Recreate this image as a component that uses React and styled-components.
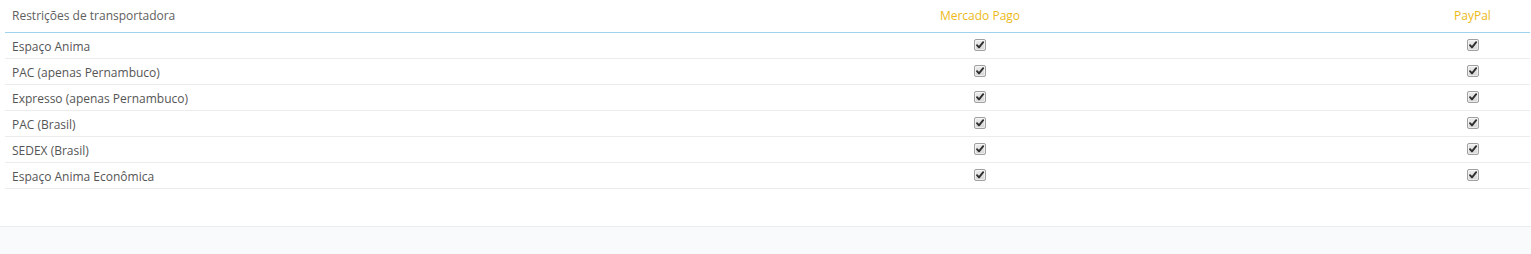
import React from "react";
import styled, { createGlobalStyle } from "styled-components";

const Global = createGlobalStyle`
  html, body { margin: 0; padding: 0; background: #fff; }
  body { font-family: "Open Sans", "Liberation Sans", sans-serif; }
`;

const Page = styled.div`
  width: 1531px;
  height: 254px;
  display: flex;
  flex-direction: column;
  background: #fff;
`;

const Panel = styled.div`
  padding: 0 1px 0 5px;
  height: 226px;
`;

const Footer = styled.div`
  flex: 1;
  border-top: 1px solid #e9ecf0;
  background: #f9fafc;
`;

const Table = styled.table`
  width: 100%;
  border-collapse: collapse;
  table-layout: fixed;
  font-size: 12px;
  color: #555;
`;

const Th = styled.th`
  font-weight: 400;
  height: 32px;
  padding: 0 7px;
  text-align: ${(p) => (p.$center ? "center" : "left")};
  color: ${(p) => (p.$accent ? "#ecb916" : "#606060")};
  border-bottom: 1px solid #9dd3ec;
  box-sizing: border-box;
  vertical-align: middle;
`;

const Td = styled.td`
  height: 26px;
  padding: 2px 7px 0;
  box-sizing: border-box;
  border-bottom: 1px solid #ececec;
  text-align: ${(p) => (p.$center ? "center" : "left")};
  vertical-align: middle;
  color: #555;
`;

const Box = styled.span`
  display: inline-block;
  width: 12px;
  height: 12px;
  box-sizing: border-box;
  border: 1px solid #a0a0a0;
  border-radius: 2px;
  background: linear-gradient(#ededed, #d6d6d6);
  box-shadow: inset 0 0 0 1px rgba(255, 255, 255, 0.5);
  vertical-align: middle;
  position: relative;
  top: -2px;
  svg { display: block; }
`;

const Check = () => (
  <Box>
    <svg width="10" height="10" viewBox="0 0 10 10">
      <path d="M2 5.2 L4 7.4 L8.2 2.2" fill="none" stroke="#2e2e2e" strokeWidth="1.9" strokeLinecap="round" strokeLinejoin="round" />
    </svg>
  </Box>
);

const rows = [
  "Espaço Anima",
  "PAC (apenas Pernambuco)",
  "Expresso (apenas Pernambuco)",
  "PAC (Brasil)",
  "SEDEX (Brasil)",
  "Espaço Anima Econômica",
];

export default function App() {
  return (
    <>
      <Global />
      <Page>
        <Panel>
          <Table>
            <colgroup>
              <col style={{ width: 540 }} />
              <col style={{ width: 870 }} />
              <col style={{ width: 115 }} />
            </colgroup>
            <thead>
              <tr>
                <Th>Restrições de transportadora</Th>
                <Th $center $accent>Mercado Pago</Th>
                <Th $center $accent>PayPal</Th>
              </tr>
            </thead>
            <tbody>
              {rows.map((r) => (
                <tr key={r}>
                  <Td>{r}</Td>
                  <Td $center><Check /></Td>
                  <Td $center><Check /></Td>
                </tr>
              ))}
            </tbody>
          </Table>
        </Panel>
        <Footer />
      </Page>
    </>
  );
}
